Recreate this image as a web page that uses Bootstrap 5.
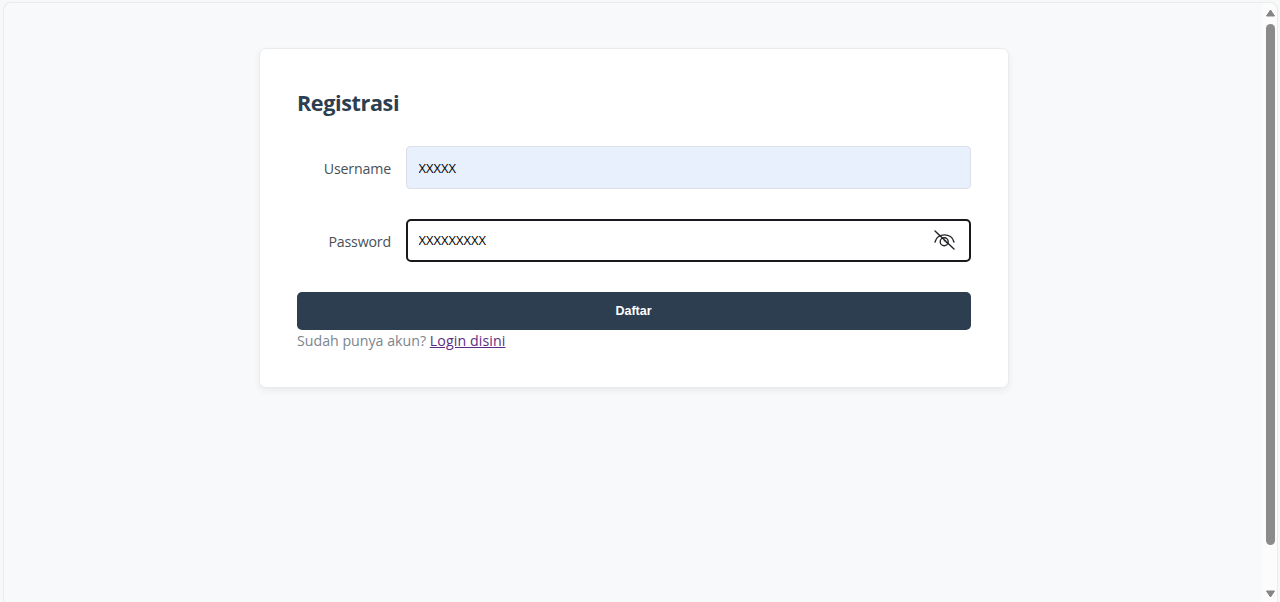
<!DOCTYPE html>
<html lang="id">
<head>
<meta charset="utf-8">
<meta name="viewport" content="width=device-width, initial-scale=1">
<title>Registrasi</title>
<link href="https://cdn.jsdelivr.net/npm/bootstrap@5.3.0/dist/css/bootstrap.min.css" rel="stylesheet">
<style>
  body { background: #f7f8f8; font-family: "Open Sans", "Noto Sans", sans-serif; font-size: 14.2px; line-height: 22px; color: #495057; }
  .window-frame { height: 602px; padding: 2px 2px 0 3px; }
  .viewport { background: #f8f9fb; border: 1px solid #e9ebec; border-bottom: 0; border-radius: 8px 8px 0 0; }
  .page-area { padding-top: 45px; padding-left: 255px; }
  .register-card { width: 750px; height: 340px; padding: 37px; border: 1px solid #e9ecef; border-radius: 7px; box-shadow: 0 3px 7px rgba(0,0,0,.06); }
  .register-title { font-size: 21.6px; line-height: 32px; letter-spacing: -.4px; color: #2c3e50; margin: 1px 0 27px; }
  .field-row { height: 43px; margin-bottom: 30px; gap: 15px; }
  .field-label { width: 94px; letter-spacing: -.17px; padding-top: 2px; }
  .field-input { height: 43px; padding: 0 11.5px; border: 1px solid #dce0e6; border-radius: 4px; font-size: 13px; font-weight: 500; box-shadow: none; }
  .field-input, .field-input:focus { background: #e8f0fe; color: #000; }
  .secret-input, .secret-input:focus { background: #fff; border: 2px solid #17191c; border-radius: 5px; padding: 0 10.5px 2px; box-shadow: none; }
  .toggle-eye { right: 16px; top: 11px; line-height: 0; }
  .register-btn { height: 38px; padding: 0 1px 0 0; border: 0; border-radius: 5px; background: #2c3e50; color: #fff; font: 700 12.5px "Liberation Sans", Arial, sans-serif; }
  .login-note { color: #7b858c; }
  .login-note a { color: #5c2d84; letter-spacing: .1px; }
  .scroll-track { width: 15px; background: #fcfcfc; border-top-right-radius: 8px; padding: 6px 0 0 1px; }
  .scroll-thumb { width: 9px; height: 521px; margin-top: 7px; border-radius: 5px; background: #8b8b8b; }
</style>
</head>
<body class="overflow-hidden">
<div class="window-frame">
  <div class="viewport d-flex h-100">
    <main class="page-area flex-grow-1">
      <section class="register-card bg-white">
        <h1 class="register-title fw-bold">Registrasi</h1>
        <form>
          <div class="field-row d-flex align-items-center">
            <label class="field-label text-end" for="username">Username</label>
            <div class="flex-grow-1"><input class="form-control field-input" id="username" type="text" value="XXXXX"></div>
          </div>
          <div class="field-row d-flex align-items-center">
            <label class="field-label text-end" for="password">Password</label>
            <div class="flex-grow-1 position-relative">
              <input class="form-control field-input secret-input" id="password" type="text" value="XXXXXXXXX">
              <span class="toggle-eye position-absolute">
                <svg width="21" height="20" viewBox="0 0 21 20" fill="none" stroke="#222528" stroke-width="1.4" stroke-linecap="round">
                  <path d="M1 12C3.2 2.5 17.8 2.5 20 12"/>
                  <circle cx="10.2" cy="11.8" r="4"/>
                  <path d="M10.3 10.8a1.5 1.5 0 0 1 2 1.7M1 1l19 18"/>
                </svg>
              </span>
            </div>
          </div>
          <button class="btn register-btn w-100 d-block" type="button">Daftar</button>
          <div class="login-note">Sudah punya akun? <a href="#">Login disini</a></div>
        </form>
      </section>
    </main>
    <div class="scroll-track d-flex flex-column align-items-center">
      <svg width="9" height="8" viewBox="0 0 9 8"><path d="M4.5 1L8.5 7H.5Z" fill="#858585" stroke="#858585" stroke-linejoin="round"/></svg>
      <div class="scroll-thumb"></div>
      <svg class="mt-auto mb-1" width="9" height="8" viewBox="0 0 9 8"><path d="M4.5 7L.5 1H8.5Z" fill="#858585" stroke="#858585" stroke-linejoin="round"/></svg>
    </div>
  </div>
</div>
<script src="https://cdn.jsdelivr.net/npm/bootstrap@5.3.0/dist/js/bootstrap.bundle.min.js"></script>
</body>
</html>
